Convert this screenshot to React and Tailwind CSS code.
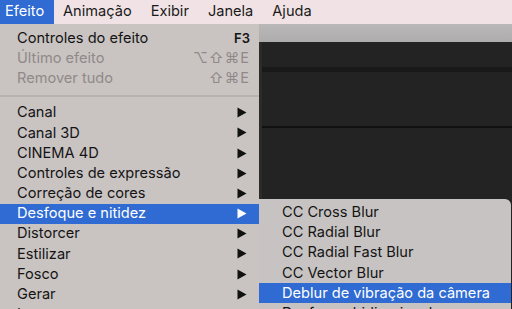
const font = { fontFamily: 'Inter, "Liberation Sans", Arial, sans-serif' };

const topMenus = ['Animação', 'Exibir', 'Janela', 'Ajuda'];

const mainGroups = [
  [
    { label: 'Controles do efeito', shortcut: 'F3', bold: true },
    { label: 'Último efeito', shortcut: '⌥⇧⌘E', disabled: true },
    { label: 'Remover tudo', shortcut: '⇧⌘E', disabled: true },
  ],
  [
    { label: 'Canal', sub: true },
    { label: 'Canal 3D', sub: true },
    { label: 'CINEMA 4D', sub: true },
    { label: 'Controles de expressão', sub: true },
    { label: 'Correção de cores', sub: true },
    { label: 'Desfoque e nitidez', sub: true, active: true },
    { label: 'Distorcer', sub: true },
    { label: 'Estilizar', sub: true },
    { label: 'Fosco', sub: true },
    { label: 'Gerar', sub: true },
    { label: 'Imagem', sub: true },
  ],
];

const blurItems = [
  { label: 'CC Cross Blur' },
  { label: 'CC Radial Blur' },
  { label: 'CC Radial Fast Blur' },
  { label: 'CC Vector Blur' },
  { label: 'Deblur de vibração da câmera', active: true },
  { label: 'Desfoque bidirecional' },
];

function Arrow({ white }) {
  return (
    <svg width="10" height="11" viewBox="0 0 10 11" className="shrink-0">
      <path d="M0.5 0.5 L9.5 5.5 L0.5 10.5 Z" fill={white ? '#ffffff' : '#111111'} />
    </svg>
  );
}

function MenuRow({ item }) {
  const text = item.active ? 'text-white' : item.disabled ? 'text-[#8f8a89]' : 'text-[#141414]';
  return (
    <div className={`flex h-[20.2px] items-center pl-[17px] ${item.shortcut ? 'pr-[9px]' : 'pr-[12px]'} ${item.active ? 'bg-[#2f6bd2]' : ''}`}>
      <span className={`flex-1 text-[14.6px] leading-none ${text}`}>{item.label}</span>
      {item.shortcut && (
        <span className={`leading-none ${item.bold ? 'text-[13px] font-semibold text-[#141414]' : 'text-[14.5px] text-[#8f8a89] tracking-[1px]'}`}>
          {item.shortcut}
        </span>
      )}
      {item.sub && <Arrow white={item.active} />}
    </div>
  );
}

export default function App() {
  return (
    <div className="w-[512px] h-[309px] overflow-hidden bg-[#232323] flex flex-col" style={font}>
      {/* Menu bar */}
      <div className="h-[24px] bg-[#f1e3e5] flex items-center shrink-0">
        <div className="h-full w-[54px] bg-[#2f6bd2] text-white text-[14.6px] flex items-center pl-[5px]">Efeito</div>
        <div className="flex text-[14.6px] text-[#1a1a1a]">
          {topMenus.map((m, i) => (
            <span key={m} className={['ml-[9px]', 'ml-[19px]', 'ml-[19px]', 'ml-[19px]'][i]}>{m}</span>
          ))}
        </div>
      </div>

      <div className="flex flex-1 min-h-0">
        {/* Efeito menu */}
        <div className="w-[259px] shrink-0 bg-[#c9c3c2] pt-[4px]">
          {mainGroups.map((group, gi) => (
            <div key={gi}>
              {gi > 0 && <div className="h-[14px] flex items-center"><div className="h-[2px] w-full bg-[#b8b2b1]" /></div>}
              {group.map((item) => <MenuRow key={item.label} item={item} />)}
            </div>
          ))}
        </div>

        {/* Window behind */}
        <div className="relative flex-1 flex flex-col border-l-[3px] border-[#2b2b2b]">
          <div className="h-[18px] bg-gradient-to-b from-[#b9b7b7] to-[#aeacac] -ml-[3px]" />
          <div className="h-[25px]" />
          <div className="h-[5px] bg-[#191919]" />
          <div className="h-[54px]" />
          <div className="h-[2px] bg-[#111111]" />

          {/* Submenu */}
          <div className="absolute left-[-3px] top-[175px] w-[252px] bg-[#c7c3c2] rounded-tr-[6px] pt-[3px]">
            {blurItems.map((item) => (
              <div key={item.label} className={`h-[20.3px] flex items-center pl-[23px] text-[14.6px] leading-none ${item.active ? 'bg-[#2f6bd2] text-white' : 'text-[#141414]'}`}>
                {item.label}
              </div>
            ))}
          </div>
        </div>
      </div>
    </div>
  );
}
